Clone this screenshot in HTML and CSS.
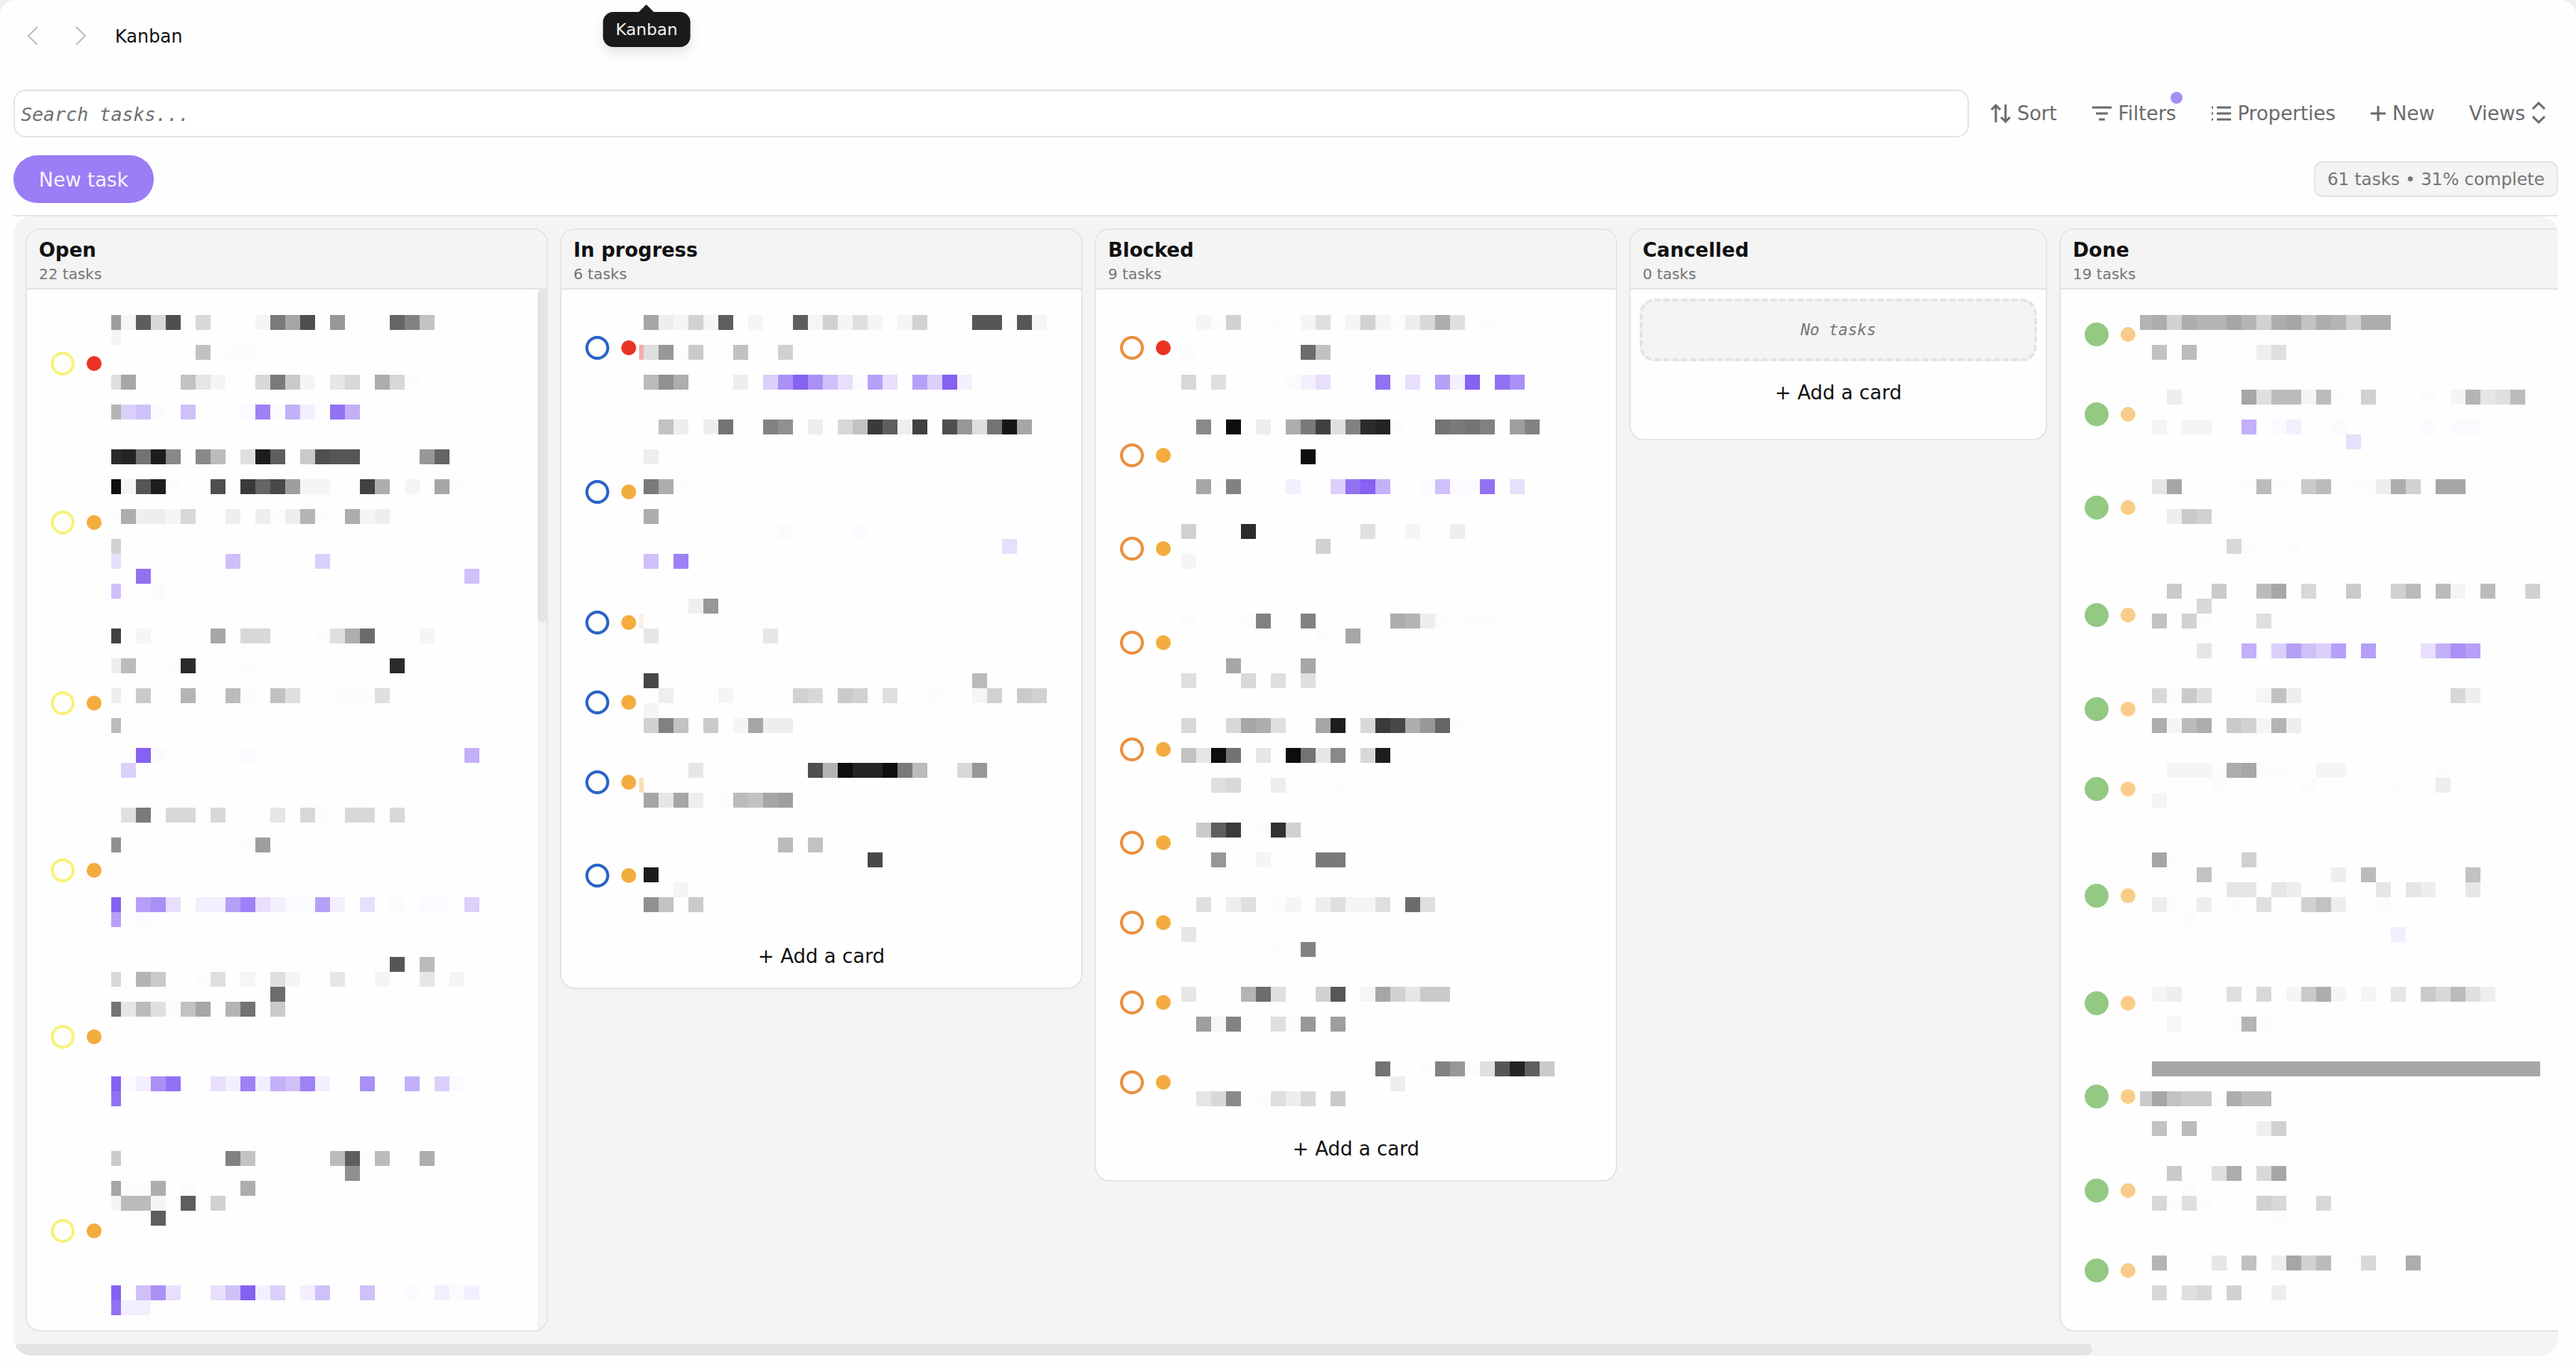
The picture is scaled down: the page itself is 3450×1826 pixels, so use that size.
FILE: index.html
```html
<!DOCTYPE html>
<html lang="en">
<head>
<meta charset="utf-8">
<title>Kanban</title>
<link rel="stylesheet" href="styles.css">
</head>
<body>
<div class="page">
  <header class="topbar">
    <button class="icon-button nav" aria-label="Back"><svg width="16" height="26" viewBox="0 0 16 26"><path d="M14 1 2 13l12 12"/></svg></button>
    <button class="icon-button nav" aria-label="Forward"><svg width="16" height="26" viewBox="0 0 16 26"><path d="m2 1 12 12L2 25"/></svg></button>
    <h1 class="title">Kanban</h1>
    <button class="icon-button more" aria-label="More options"><svg width="28" height="8" viewBox="0 0 28 8"><circle cx="4" cy="4" r="3"/><circle cx="14" cy="4" r="3"/><circle cx="24" cy="4" r="3"/></svg></button>
  </header>
  <div class="tooltip" role="tooltip">Kanban</div>

  <main class="content">
    <div class="toolbar">
      <input class="search" type="text" placeholder="Search tasks..." aria-label="Search tasks">
      <button class="tool"><svg class="icon" width="28" height="28" viewBox="0 0 28 28"><path d="M8 26V3M2 9l6-6 6 6M21 2v23M15 19l6 6 6-6"/></svg>Sort</button>
      <button class="tool"><svg class="icon" width="28" height="28" viewBox="0 0 28 28"><path d="M1 6h26M6 14h16M10 22h8"/></svg>Filters<span class="tool-badge"></span></button>
      <button class="tool"><svg class="icon" width="28" height="28" viewBox="0 0 28 28"><path d="M8 6h19M8 14h19M8 22h19M1 6h2M1 14h2M1 22h2"/></svg>Properties</button>
      <button class="tool"><svg class="icon" width="22" height="28" viewBox="0 0 22 28"><path d="M11 4v20M1 14h20"/></svg>New</button>
      <button class="tool">Views<svg class="icon" width="20" height="28" viewBox="0 0 20 28"><path d="m2 8 8-8 8 8M2 18l8 8 8-8"/></svg></button>
    </div>

    <div class="summary">
      <button class="new-task">New task</button>
      <span class="stats">61 tasks • 31% complete</span>
    </div>

    <div class="board">
      <div class="columns">
        <section class="column status-open" data-column="open">
          <header class="column-head"><h2>Open</h2><p>22 tasks</p></header>
          <div class="column-body">
            <ul class="cards"></ul>
            <div class="scroll-track"><div class="scroll-thumb"></div></div>
          </div>
        </section>
        <section class="column status-progress" data-column="progress">
          <header class="column-head"><h2>In progress</h2><p>6 tasks</p></header>
          <div class="column-body">
            <ul class="cards"></ul>
            <button class="add">+ Add a card</button>
          </div>
        </section>
        <section class="column status-blocked" data-column="blocked">
          <header class="column-head"><h2>Blocked</h2><p>9 tasks</p></header>
          <div class="column-body">
            <ul class="cards"></ul>
            <button class="add">+ Add a card</button>
          </div>
        </section>
        <section class="column column-narrow">
          <header class="column-head"><h2>Cancelled</h2><p>0 tasks</p></header>
          <div class="column-body">
            <p class="empty">No tasks</p>
            <button class="add">+ Add a card</button>
          </div>
        </section>
        <section class="column status-done" data-column="done">
          <header class="column-head"><h2>Done</h2><p>19 tasks</p></header>
          <div class="column-body">
            <ul class="cards"></ul>
          </div>
        </section>
      </div>
      <div class="board-scroll"><div class="board-thumb"></div></div>
    </div>
  </main>
</div>
<script src="board.js"></script>
</body>
</html>
```
FILE: styles.css
```css
* {
  box-sizing: border-box;
}

body {
  margin: 0;
  background: #f0f0f0;
  color: #111;
  font-family: "DejaVu Sans", sans-serif;
  font-size: 26px;
}

h1, h2, p, ul {
  margin: 0;
  padding: 0;
}

button {
  margin: 0;
  padding: 0;
  border: 0;
  background: none;
  color: inherit;
  font: inherit;
}

svg {
  display: block;
  overflow: visible;
  fill: none;
}

.page {
  display: flex;
  flex-direction: column;
  height: 100vh;
  background: #fefefe;
  border-radius: 20px 20px 0 0;
}

.topbar {
  display: flex;
  align-items: center;
  height: 96px;
  flex: none;
  padding: 0 32px 0 36px;
}

.nav {
  width: 64px;
  stroke: #bdbdbd;
  stroke-width: 2;
}

.title {
  flex: 1;
  margin-left: -10px;
  padding-top: 2px;
  font-size: 24px;
  font-weight: 400;
}

.more {
  fill: #6b6b6b;
}

.tooltip {
  position: absolute;
  top: 16px;
  left: 25.1%;
  transform: translateX(-50%);
  padding: 0 17px;
  border-radius: 14px;
  background: #1a1a1a;
  color: #f2f2f2;
  font-size: 22px;
  line-height: 47px;
  box-shadow: 0 8px 16px rgba(0, 0, 0, 0.1);
}

.tooltip::before {
  content: "";
  position: absolute;
  top: -10px;
  left: 50%;
  margin-left: -10px;
  border: solid transparent;
  border-width: 0 10px 10px;
  border-bottom-color: #1a1a1a;
}

.content {
  display: flex;
  flex-direction: column;
  flex: 1;
  min-height: 0;
  padding: 24px 24px 10px 18px;
}

.toolbar {
  display: flex;
  align-items: center;
  gap: 46px;
  padding-right: 16px;
  color: #6b6b6b;
}

.search {
  flex: 1;
  min-width: 0;
  height: 64px;
  margin-right: -18px;
  padding: 2px 8px 0;
  border: 2px solid #e4e4e4;
  border-radius: 16px;
  background: #fff;
  font: italic 25px "DejaVu Sans Mono", monospace;
}

.search::placeholder {
  color: #707070;
  opacity: 1;
}

.tool {
  position: relative;
  display: flex;
  align-items: center;
  gap: 8px;
}

.icon {
  stroke: #6b6b6b;
  stroke-width: 3;
}

.tool-badge {
  position: absolute;
  top: -14px;
  right: -8px;
  width: 16px;
  height: 16px;
  border-radius: 50%;
  background: #a58df5;
}

.summary {
  display: flex;
  align-items: center;
  justify-content: space-between;
  padding: 24px 0 16px;
  border-bottom: 2px solid #e4e4e4;
}

.new-task {
  height: 64px;
  padding: 2px 34px 0;
  border-radius: 32px;
  background: #9b7df5;
  color: #f6f2ff;
}

.stats {
  padding: 0 16px;
  border: 2px solid #e4e4e4;
  border-radius: 12px;
  background: #f4f4f4;
  color: #757575;
  font-size: 23px;
  line-height: 44px;
}

.board {
  display: flex;
  flex-direction: column;
  flex: 1;
  min-height: 0;
  overflow: hidden;
  border-radius: 24px;
  background: #f4f4f4;
}

.columns {
  display: flex;
  align-items: flex-start;
  flex: 1;
  gap: 16px;
  min-height: 0;
  padding: 16px;
}

.column {
  display: flex;
  flex: none;
  flex-direction: column;
  width: 700px;
  min-height: 284px;
  max-height: 100%;
  overflow: hidden;
  border: 2px solid #e4e4e4;
  border-radius: 20px;
  background: #fefefe;
}

.column-narrow {
  width: 560px;
}

.column-head {
  flex: none;
  height: 80px;
  padding: 10px 16px;
  border-bottom: 2px solid #e4e4e4;
  background: #f4f4f4;
}

.column-head h2 {
  font-size: 26px;
  line-height: 34px;
}

.column-head p {
  color: #757575;
  font-size: 20px;
  line-height: 30px;
}

.column-body {
  position: relative;
  display: flex;
  flex-direction: column;
  min-height: 0;
  padding: 6px 0;
  overflow: hidden;
}

.cards {
  flex: none;
  list-style: none;
}

.card {
  display: flex;
  align-items: center;
  gap: 16px;
  padding-left: 32px;
}

.state {
  width: 32px;
  height: 32px;
  border: 4px solid var(--status);
  border-radius: 50%;
}

.priority {
  width: 20px;
  height: 20px;
  border-radius: 50%;
  background: #f4ac3e;
}

.priority-high {
  background: #ea3323;
}

.status-open {
  --status: #f7f27c;
}

.status-progress {
  --status: #2b63c6;
}

.status-blocked {
  --status: #e9903f;
}

.status-done {
  --status: #93c983;
}

.status-done .state {
  background: var(--status);
}

.status-done .priority {
  background: #f9cd89;
}

.redaction {
  position: absolute;
  top: 34px;
  left: 0;
  width: 100%;
  height: 100%;
  pointer-events: none;
}

.add {
  flex: none;
  height: 72px;
}

.empty {
  margin: 6px 12px;
  border: 4px dashed #e4e4e4;
  border-radius: 20px;
  background: #f4f4f4;
  color: #757575;
  font: italic 21px/76px "DejaVu Sans Mono", monospace;
  text-align: center;
}

.scroll-track {
  position: absolute;
  top: 0;
  right: 0;
  width: 12px;
  height: 100%;
  background: #f4f4f4;
}

.scroll-thumb {
  height: 32%;
  border-radius: 6px;
  background: #e4e4e4;
}

.board-scroll {
  flex: none;
  height: 16px;
}

.board-thumb {
  width: 81.7%;
  height: 100%;
  border-radius: 8px;
  background: #e4e4e4;
}
```
FILE: board.js
```javascript
// Each column: card heights, the number of high-priority cards at the top, and
// the redaction mosaic. Mosaic rows are [row, first cell, shades]; 0-z is a
// grey ramp, A-J a violet ramp, "_" a trace of violet.
const CELL = 20;
const TINTS = { R: '#f5abab', P: '#fcefe4', O: '#f9ddb3' };

const board = {
  open: {
    heights: [186, 240, 244, 204, 241, 280, 180], high: 1, origin: 126, lead: 13,
    rows: [
      [0, 0, 'mydub.u...yhnb.l...eir'], [1, 0, 'y'], [2, 6, 'r.zz'],
      [4, 0, 'vn...rwy..uhsy.wu.ouz'], [6, 0, 'pCD_.D..._H_EA.IE'],
      [9, 0, '65g4j.jq.v4d.sbcc....le'], [11, 0, '2yc4z..b.8eamyy..9o.y.nz'],
      [13, 0, 'zoxxyu..x.xzxpz.oyx'], [15, 0, 't'], [16, 0, 'B.......D.....C'],
      [17, 2, 'I'], [17, 24, 'D'], [18, 0, 'D.._'],
      [21, 0, '9.y....n.uu...zvof...y'], [23, 0, 'xq..z6...z.........6'],
      [25, 0, 'x.s..p..qz.rv..zzzv'], [27, 0, 'q'], [29, 2, 'J_....._'],
      [29, 24, 'E'], [30, 1, 'C'], [33, 1, 'vh.uu.u...w.uz.uu.u'],
      [35, 0, 'k........zm'], [39, 0, 'J.FGB.AAFHBA__FA.B._.__.C'], [40, 0, 'F._'],
      [43, 19, 'c.q'], [44, 0, 'u.ps..zv.y.vy..w..y..w.y'], [45, 11, 'f'],
      [46, 0, 'gwqvzrn.pg.s'], [51, 0, 'J_AGI..BAHAEDHA..G..E.C_'], [52, 0, 'I'],
      [56, 0, 's.......ir.....qdzq..o'], [57, 16, 'k'], [58, 0, 'nzzo.z...o'],
      [59, 0, 'yqqy.d.t'], [60, 3, 'd'], [65, 0, 'J.DGB..BDJAC.AD..D.._.A_A'],
      [66, 0, 'IAA']
    ]
  },
  progress: {
    heights: [144, 242, 107, 107, 107, 144], high: 1, origin: 110, lead: 6,
    rows: [
      [0, 1, 'nxytyd.y..dytyvy.yt...cczcy'], [2, 0, 'Rvlzs..r..t'],
      [4, 1, 'qko...x.CGJGDB_FB.FCJA'], [7, 2, 'rx.xg..ik.x.ur8dx9.blvg3n'],
      [9, 1, 'x'], [11, 1, 'hoz'], [13, 1, 'o'], [14, 10, '_...._'], [15, 25, 'B'],
      [16, 1, 'D.H'], [19, 4, 'xl'], [20, 0, 'P'], [21, 1, 'w.......w'],
      [24, 1, 'a'], [24, 23, 'q'], [25, 2, 'x...y....tu.st.v..z..yt.st'],
      [26, 1, 'y'], [27, 1, 'tir.s.ynxx'], [30, 4, 'w.......bp2552hq..ul'],
      [31, 0, 'O'], [32, 1, 'nwnx.zqrnm'], [35, 10, 'q.r'], [36, 16, 'a'],
      [37, 1, '4'], [38, 3, 'y'], [39, 1, 'kr.s']
    ]
  },
  blocked: {
    heights: [144, 144, 106, 145, 142, 107, 107, 107, 107], high: 1, origin: 134, lead: 20,
    rows: [
      [0, 1, 'yzt..z.yv.ytyzxuov.z'], [2, 0, 'z.......fr'],
      [4, 0, 'u.v...._AB...I.B.FAJ.IG'], [7, 1, 'j.2.x.oh9vi65z..ghgi.mi'],
      [9, 8, '2'], [11, 1, 'nzi...A..CIJE.._D__I.B'], [14, 0, 't...6.......v..y..x'],
      [15, 9, 't'], [16, 0, 'y'], [20, 0, 'z...zi..i.....opxz.zz'], [21, 9, 'z.n'],
      [23, 3, 'n....n'], [24, 0, 'v...u.v.v'], [27, 0, 'u..unov..n4.u8aolez'],
      [29, 0, 'rw2g.w.2gwj.u4'], [31, 2, 'vu..x...z'], [34, 1, 'sd8.z7t'],
      [36, 2, 'l..y...hh'], [39, 1, 'v.xv.zy.xvyyv.fv'], [41, 0, 'w'], [42, 6, 'z.i'],
      [45, 0, 'w...pfv..tc.yntwss'], [47, 1, 'myi..vzl.m'], [50, 13, 'g..zilzvc5ds'],
      [51, 14, 'x'], [52, 1, 'wuj.zvxu.s']
    ]
  },
  done: {
    heights: [107, 107, 144, 144, 107, 107, 180, 107, 144, 107, 107, 107], high: 0, origin: 122, lead: 16,
    rows: [
      [0, 0, 'potoppnptonroptoo'], [2, 1, 'r.q....xv'], [5, 2, 'x....nvqqyqz.t...z.ypwvq'],
      [7, 1, 'y.yy..E._A.._....._.__'], [8, 14, 'B'], [11, 1, 'wn....zqz.sq.zzxot.nn'],
      [13, 2, 'xst'], [15, 6, 'uz..z'], [18, 2, 's..s..qn.u..s..tq.qy.q..t'],
      [19, 4, 'u'], [20, 1, 'r.tz...v'], [22, 4, 'w..E.CFDCF.F...BEGF'],
      [25, 1, 'uzsv...yrx..........ux'], [27, 1, 'oyqo.stypx'],
      [30, 2, 'yyyzonzz..yy......z'], [31, 5, 'z.....z.....z..x'], [32, 1, 'y'],
      [36, 1, 'nz....t'], [37, 4, 'r........x.q......r'], [38, 6, 'ww.wx.....w.wx..w'],
      [39, 1, 'xz.x.z.v..trx..z'], [40, 3, 'z'], [41, 17, 'A'],
      [45, 1, 'yx...v.u.ysoy.y.w.suqvx'], [47, 2, 'y...zpz'],
      [50, 1, 'nnnnnnnnnnnnnnnnnnnnnnnnnn'], [52, 0, 'snrsszoqq'], [54, 1, 'r.q....xt'],
      [57, 2, 's..vo.un'], [58, 3, 'z'], [59, 1, 'uzvz...tu..u'], [60, 9, 'z'],
      [63, 1, 'p...w.r.xntq.zu..o'], [65, 1, 'u.vu.t..x']
    ]
  }
};

function shade(key) {
  if (TINTS[key]) return TINTS[key];
  if (key === '_' || (key >= 'A' && key <= 'J')) {
    const t = key === '_' ? 0.03 : (key.charCodeAt(0) - 64) / 10;
    return `rgb(${[134, 97, 242].map(v => Math.round(255 + (v - 255) * t))})`;
  }
  const grey = Math.round(parseInt(key, 36) * 7.2);
  return `rgb(${grey},${grey},${grey})`;
}

function mosaic({ rows, origin, lead }) {
  let rects = '';
  for (const [row, start, shades] of rows) {
    [...shades].forEach((key, i) => {
      if (key === '.') return;
      const cell = start + i;
      const width = cell === 0 ? lead : CELL;
      const x = cell === 0 ? origin - lead : origin + (cell - 1) * CELL;
      rects += `<rect x="${x}" y="${row * CELL}" width="${width}" height="${CELL}" fill="${shade(key)}"/>`;
    });
  }
  return `<svg class="redaction" aria-hidden="true" shape-rendering="crispEdges">${rects}</svg>`;
}

document.querySelectorAll('[data-column]').forEach(column => {
  const data = board[column.dataset.column];
  column.querySelector('.cards').innerHTML = data.heights.map((height, i) =>
    `<li class="card" style="height:${height}px">
      <button class="state" aria-label="Change status"></button>
      <span class="priority${i < data.high ? ' priority-high' : ''}"></span>
    </li>`).join('');
  column.querySelector('.cards').insertAdjacentHTML('afterend', mosaic(data));
});
```
